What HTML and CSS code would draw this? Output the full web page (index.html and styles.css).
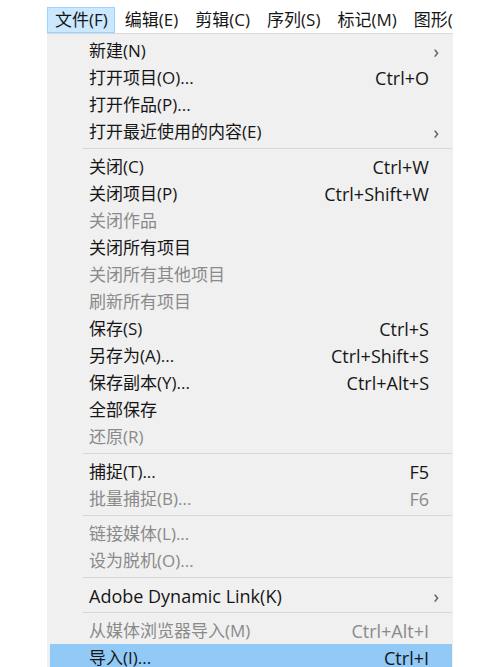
FILE: index.html
```html
<!DOCTYPE html>
<html lang="zh-CN">
<head>
<meta charset="utf-8">
<title>文件菜单</title>
<link rel="stylesheet" href="styles.css">
</head>
<body>
<div class="wrap">
  <div class="menubar">
    <span class="top-item active">文件(F)</span>
    <span class="top-item">编辑(E)</span>
    <span class="top-item">剪辑(C)</span>
    <span class="top-item">序列(S)</span>
    <span class="top-item">标记(M)</span>
    <span class="top-item">图形(G)</span>
  </div>
  <div class="menu">
    <div class="row"><span class="label">新建(N)</span><span class="arrow">›</span></div>
    <div class="row"><span class="label">打开项目(O)...</span><span class="key">Ctrl+O</span></div>
    <div class="row"><span class="label">打开作品(P)...</span></div>
    <div class="row"><span class="label">打开最近使用的内容(E)</span><span class="arrow">›</span></div>
    <div class="sep"></div>
    <div class="row"><span class="label">关闭(C)</span><span class="key">Ctrl+W</span></div>
    <div class="row"><span class="label">关闭项目(P)</span><span class="key">Ctrl+Shift+W</span></div>
    <div class="row off"><span class="label">关闭作品</span></div>
    <div class="row"><span class="label">关闭所有项目</span></div>
    <div class="row off"><span class="label">关闭所有其他项目</span></div>
    <div class="row off"><span class="label">刷新所有项目</span></div>
    <div class="row"><span class="label">保存(S)</span><span class="key">Ctrl+S</span></div>
    <div class="row"><span class="label">另存为(A)...</span><span class="key">Ctrl+Shift+S</span></div>
    <div class="row"><span class="label">保存副本(Y)...</span><span class="key">Ctrl+Alt+S</span></div>
    <div class="row"><span class="label">全部保存</span></div>
    <div class="row off"><span class="label">还原(R)</span></div>
    <div class="sep"></div>
    <div class="row"><span class="label">捕捉(T)...</span><span class="key">F5</span></div>
    <div class="row off"><span class="label">批量捕捉(B)...</span><span class="key">F6</span></div>
    <div class="sep"></div>
    <div class="row off"><span class="label">链接媒体(L)...</span></div>
    <div class="row off"><span class="label">设为脱机(O)...</span></div>
    <div class="sep"></div>
    <div class="row"><span class="label latin">Adobe Dynamic Link(K)</span><span class="arrow">›</span></div>
    <div class="sep"></div>
    <div class="row off"><span class="label">从媒体浏览器导入(M)</span><span class="key">Ctrl+Alt+I</span></div>
    <div class="row hot"><span class="label">导入(I)...</span><span class="key">Ctrl+I</span></div>
  </div>
</div>
</body>
</html>
```

FILE: styles.css
```css
html, body {
  margin: 0;
  padding: 0;
  background: #ffffff;
}

body {
  width: 500px;
  height: 667px;
  overflow: hidden;
  font-family: "Open Sans", "Noto Sans CJK SC", sans-serif;
  font-size: 17px;
  color: #161616;
}

.wrap {
  margin-left: 47px;
  width: 406px;
}

.menubar {
  display: flex;
  padding-top: 7px;
  height: 26px;
  overflow: hidden;
  white-space: nowrap;
}

.top-item {
  flex: none;
  box-sizing: border-box;
  height: 26px;
  line-height: 24px;
  padding: 0 6px 0 7px;
  margin-right: 2px;
  border: 1px solid transparent;
}

.top-item.active {
  background: #cce8ff;
  border-color: #99d1ff;
}

.menu {
  background: #f0f0f0;
  border-top: 1px solid #d9d9d9;
  padding: 3px 1px 0 3px;
}

.row {
  display: flex;
  align-items: center;
  height: 27px;
  padding-left: 39px;
  padding-right: 23px;
  white-space: nowrap;
}

.row span {
  line-height: 16px;
}

.row .label {
  flex: 1;
}

.row .label.latin {
  font-size: 18px;
}

.row .key {
  flex: none;
  font-size: 18px;
}

.row .arrow {
  flex: none;
  font-size: 18px;
  color: #555;
  margin-right: -10px;
}

.row.off {
  color: #8a8a8a;
}

.row.hot {
  background: #91c9f7;
}

.sep {
  height: 1px;
  margin: 3px 0 4px 33px;
  background: #d7d7d7;
}
```
